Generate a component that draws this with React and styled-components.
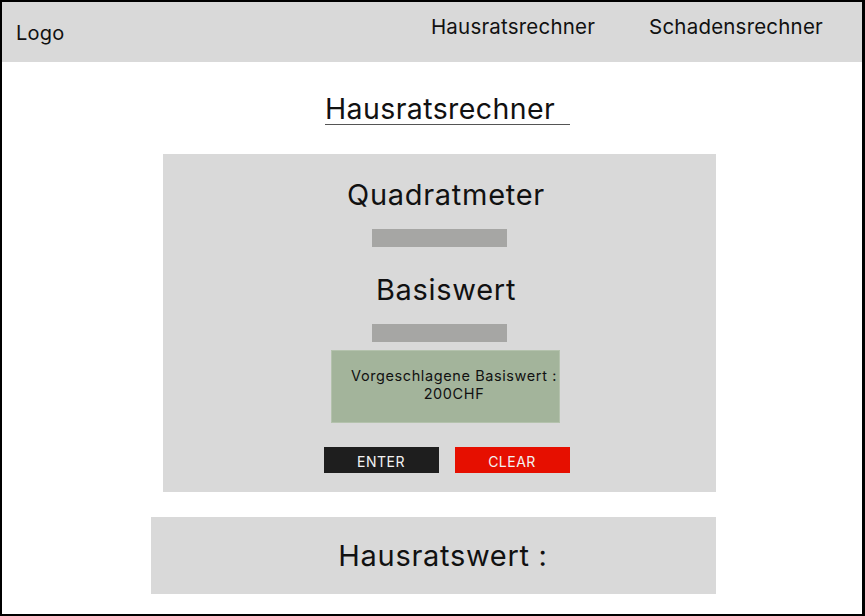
import React from "react";
import styled, { createGlobalStyle } from "styled-components";

const Global = createGlobalStyle`
  html, body { margin: 0; padding: 0; background: #fff; }
  body { font-family: Inter, "Noto Sans", sans-serif; color: #111; }
  * { box-sizing: border-box; }
`;

const Frame = styled.div`
  width: 865px;
  height: 616px;
  border: 2px solid #000;
  border-right-width: 3px;
  display: flex;
  flex-direction: column;
  overflow: hidden;
  background: #fff;
`;

const Header = styled.header`
  height: 60px;
  background: #d9d9d9;
  display: flex;
  align-items: flex-start;
  padding: 0 39px 0 14px;
  flex-shrink: 0;
`;

const Logo = styled.div`
  font-size: 20px;
  line-height: 24px;
  margin-top: 19px;
  letter-spacing: 0.2px;
  flex: 1;
`;

const Nav = styled.nav`
  display: flex;
  gap: 54px;
  margin-top: 13px;
`;

const NavLink = styled.a`
  font-size: 20.5px;
  line-height: 24px;
  letter-spacing: 0.2px;
  color: #111;
  text-decoration: none;
`;

const Main = styled.main`
  display: flex;
  flex-direction: column;
  align-items: flex-start;
`;

const Title = styled.h1`
  margin: 31px 0 0 323px;
  font-size: 28.5px;
  font-weight: 400;
  line-height: 31px;
  padding-right: 15px;
  border-bottom: 1.5px solid #555;
  letter-spacing: 0.4px;
`;

const Card = styled.section`
  margin: 29px 0 0 161px;
  width: 553px;
  height: 338px;
  background: #d9d9d9;
  display: flex;
  flex-direction: column;
  align-items: center;
  padding-top: 24px;
`;

const Label = styled.div`
  font-size: 29px;
  line-height: 34px;
  letter-spacing: 0.7px;
  margin-left: ${(p) => p.$shift || 0}px;
  margin-top: ${(p) => p.$top || 0}px;
`;

const InputBar = styled.div`
  width: 135px;
  height: 18px;
  background: #a6a6a4;
  margin-top: ${(p) => p.$top || 0}px;
`;

const Suggestion = styled.div`
  width: 229px;
  height: 73px;
  background: #a3b49b;
  margin-top: 8px;
  margin-left: 12px;
  font-size: 14.5px;
  line-height: 18px;
  letter-spacing: 0.6px;
  text-align: center;
  padding-top: 16px;
  padding-left: 17px;
  border: 1px solid #b4c2ad;
  white-space: nowrap;
`;

const Buttons = styled.div`
  display: flex;
  gap: 16px;
  margin-top: 24px;
  margin-left: 14px;
`;

const Button = styled.button`
  width: 115px;
  height: 26px;
  border: none;
  background: ${(p) => p.$bg};
  color: #f2f2f2;
  font-family: Inter, "Noto Sans", sans-serif;
  font-size: 14px;
  letter-spacing: 0.5px;
  padding: 3px 0 0;
  cursor: pointer;
`;

const Result = styled.section`
  margin: 25px 0 0 149px;
  width: 565px;
  height: 77px;
  background: #d9d9d9;
  display: flex;
  align-items: center;
  justify-content: center;
  font-size: 29px;
  letter-spacing: 0.7px;
  padding-left: 19px;
`;

export default function App() {
  return (
    <>
      <Global />
      <Frame>
        <Header>
          <Logo>Logo</Logo>
          <Nav>
            <NavLink>Hausratsrechner</NavLink>
            <NavLink>Schadensrechner</NavLink>
          </Nav>
        </Header>
        <Main>
          <Title>Hausratsrechner</Title>
          <Card>
            <Label $shift={13}>Quadratmeter</Label>
            <InputBar $top={17} />
            <Label $shift={13} $top={26}>Basiswert</Label>
            <InputBar $top={17} />
            <Suggestion>
              Vorgeschlagene Basiswert :
              <br />
              200CHF
            </Suggestion>
            <Buttons>
              <Button $bg="#1e1e1e">ENTER</Button>
              <Button $bg="#e60f00">CLEAR</Button>
            </Buttons>
          </Card>
          <Result>Hausratswert :</Result>
        </Main>
      </Frame>
    </>
  );
}
